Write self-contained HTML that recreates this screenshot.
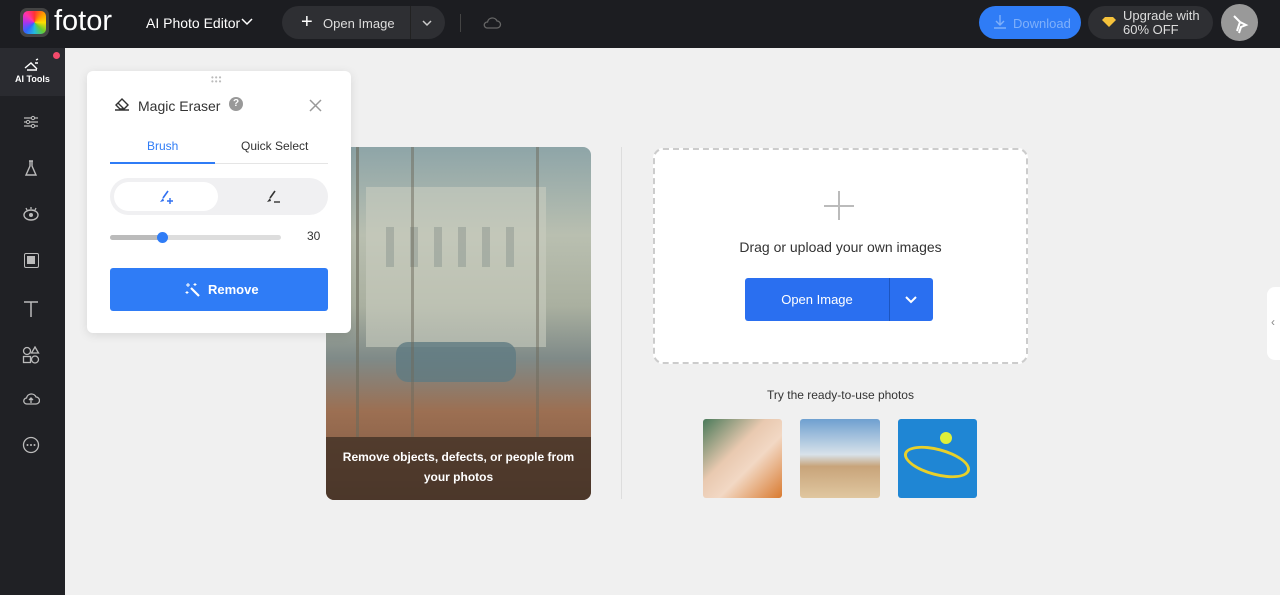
<!DOCTYPE html><html><head><meta charset="utf-8"><style>
*{box-sizing:border-box;margin:0;padding:0}
body{width:1280px;height:595px;overflow:hidden;background:#f0f0f0;font-family:"Liberation Sans",sans-serif;position:relative}
.top{position:absolute;left:0;top:0;width:1280px;height:48px;background:#1c1d21}
.side{position:absolute;left:0;top:48px;width:65px;height:547px;background:#202125}
.ab{position:absolute}
.si{position:absolute;left:22px}
</style></head><body>
<div class="top">
 <div class="ab" style="left:20px;top:8px;width:29px;height:29px;border-radius:7px;background:#444;padding:3px"><div style="width:23px;height:23px;border-radius:5px;background:conic-gradient(#f33,#f90,#fd0,#6c3,#2bd,#36f,#a3e,#f3a,#f33)"></div></div>
 <div class="ab" style="left:54px;top:5px;color:#fff;font-size:29px">fotor</div>
 <div class="ab" style="left:146px;top:15px;color:#fff;font-size:14px">AI Photo Editor</div>
 <svg class="ab" style="left:241px;top:18px" width="12" height="8"><path d="M1 1l5 5 5-5" fill="none" stroke="#fff" stroke-width="1.5"/></svg>
 <div class="ab" style="left:282px;top:6px;width:163px;height:33px;border-radius:17px;background:#2e2f33"></div>
 <div class="ab" style="left:410px;top:6px;width:1px;height:33px;background:#222"></div>
 <div class="ab" style="left:301px;top:11px;color:#fff;font-size:20px">+</div>
 <div class="ab" style="left:323px;top:16px;color:#ddd;font-size:13px">Open Image</div>
 <svg class="ab" style="left:422px;top:20px" width="10" height="7"><path d="M1 1l4 4 4-4" fill="none" stroke="#ccc" stroke-width="1.5"/></svg>
 <div class="ab" style="left:460px;top:14px;width:1px;height:18px;background:#444"></div>
 <svg class="ab" style="left:482px;top:15px" width="20" height="16"><path d="M5 13h10a3.5 3.5 0 0 0 0-7a5 5 0 0 0-9.5 1A3 3 0 0 0 5 13z" fill="none" stroke="#666" stroke-width="1.3"/></svg>
 <div class="ab" style="left:979px;top:6px;width:102px;height:33px;border-radius:17px;background:#2f7cf6;color:#7fb0fa;font-size:13px;padding:10px 0 0 34px">Download</div>
 <svg class="ab" style="left:993px;top:14px" width="14" height="16"><path d="M7 1v10M3 7l4 4 4-4M1 14h12" fill="none" stroke="#7fb0fa" stroke-width="1.4"/></svg>
 <div class="ab" style="left:1088px;top:6px;width:125px;height:33px;border-radius:17px;background:#2e2f33;color:#ddd;font-size:13px;line-height:14px;padding:3px 0 0 35px">Upgrade with<br>60% OFF</div>
 <svg class="ab" style="left:1102px;top:16px" width="14" height="12"><path d="M3 1h8l3 3-7 7-7-7z" fill="#f5c23b"/></svg>
 <div class="ab" style="left:1221px;top:4px;width:37px;height:37px;border-radius:50%;background:#999"></div>
 <svg class="ab" style="left:1230px;top:12px" width="20" height="22"><path d="M4 4l6 6 6 3-5 2-2 6M10 10l-3 9" fill="none" stroke="#fff" stroke-width="2"/></svg>
</div>
<div class="side">
 <div class="ab" style="left:0;top:0;width:65px;height:48px;background:#2a2b30"></div>
 <div class="ab" style="left:53px;top:4px;width:7px;height:7px;border-radius:50%;background:#f34a6b"></div>
 <svg class="ab" style="left:24px;top:10px" width="16" height="14"><path d="M1 10l6-5 6 6M3 12h10M12 2l2-1M11 5l3 0" fill="none" stroke="#fff" stroke-width="1.4"/></svg>
 <div class="ab" style="left:15px;top:26px;color:#fff;font-size:9px;font-weight:bold">AI Tools</div>
 <svg class="si" style="top:66px" width="18" height="16"><path d="M2 4h14M2 8h14M2 12h14" stroke="#bbb" stroke-width="1.3"/><circle cx="11" cy="4" r="1.6" fill="#202125" stroke="#bbb"/><circle cx="6" cy="8" r="1.6" fill="#202125" stroke="#bbb"/><circle cx="11" cy="12" r="1.6" fill="#202125" stroke="#bbb"/></svg>
 <svg class="si" style="top:111px" width="18" height="18"><path d="M7 2h4M8 2v5l-4 9h10l-4-9V2" fill="none" stroke="#bbb" stroke-width="1.4"/></svg>
 <svg class="si" style="top:157px" width="18" height="18"><ellipse cx="9" cy="10" rx="7" ry="5" fill="none" stroke="#bbb" stroke-width="1.4"/><circle cx="9" cy="10" r="2" fill="#bbb"/><path d="M9 2v2M4 3l1 2M14 3l-1 2" stroke="#bbb" stroke-width="1.3"/></svg>
 <div class="ab" style="left:24px;top:205px;width:15px;height:15px;border:1.5px solid #bbb;border-radius:2px;padding:2px"><div style="width:8px;height:8px;background:#bbb"></div></div>
 <svg class="si" style="top:252px" width="18" height="18"><path d="M2 2h14M9 2v15" stroke="#bbb" stroke-width="1.5"/></svg>
 <svg class="si" style="top:298px" width="18" height="18"><circle cx="5" cy="5" r="3.5" fill="none" stroke="#bbb" stroke-width="1.3"/><path d="M13 1l3.5 6h-7z" fill="none" stroke="#bbb" stroke-width="1.3"/><rect x="1.5" y="10.5" width="7" height="6" fill="none" stroke="#bbb" stroke-width="1.3"/><circle cx="13" cy="13.5" r="3.5" fill="none" stroke="#bbb" stroke-width="1.3"/></svg>
 <svg class="si" style="top:343px" width="18" height="16"><path d="M5 13h9a3.5 3.5 0 0 0 0-7a5 5 0 0 0-9.5 1A3 3 0 0 0 5 13zM9 12V7M7 9l2-2 2 2" fill="none" stroke="#bbb" stroke-width="1.3"/></svg>
 <svg class="si" style="top:388px" width="18" height="18"><circle cx="9" cy="9" r="7.5" fill="none" stroke="#bbb" stroke-width="1.3"/><circle cx="5.5" cy="9" r="1" fill="#bbb"/><circle cx="9" cy="9" r="1" fill="#bbb"/><circle cx="12.5" cy="9" r="1" fill="#bbb"/></svg>
</div>
<!-- photo card -->
<div class="ab" style="left:326px;top:147px;width:265px;height:353px;border-radius:8px;overflow:hidden;background:linear-gradient(180deg,#8ea5a8 0%,#b9bfb0 25%,#aab0a0 45%,#7f8a88 60%,#9c6f52 75%,#7a5540 100%)">
 <div class="ab" style="left:40px;top:40px;width:180px;height:160px;background:#c9cdc0;opacity:.6"></div>
 <div class="ab" style="left:60px;top:80px;width:140px;height:40px;background:repeating-linear-gradient(90deg,#8c9690 0 8px,transparent 8px 24px);opacity:.5"></div>
 <div class="ab" style="left:70px;top:195px;width:120px;height:40px;border-radius:12px;background:#5f7a82;opacity:.8"></div>
 <div class="ab" style="left:30px;top:0;width:3px;height:290px;background:#6d6a5c;opacity:.6"></div>
 <div class="ab" style="left:85px;top:0;width:3px;height:290px;background:#6d6a5c;opacity:.5"></div>
 <div class="ab" style="left:210px;top:0;width:3px;height:290px;background:#6d6a5c;opacity:.5"></div>
 <div class="ab" style="left:0;top:290px;width:265px;height:63px;background:rgba(60,45,35,.75);color:#fff;font-size:12px;font-weight:bold;text-align:center;line-height:20px;padding-top:10px">Remove objects, defects, or people from<br>your photos</div>
</div>
<div class="ab" style="left:621px;top:147px;width:1px;height:352px;background:#ddd"></div>
<div class="ab" style="left:653px;top:148px;width:375px;height:216px;border:2px dashed #ccc;border-radius:10px;background:#fff"></div>
<div class="ab" style="left:824px;top:205px;width:30px;height:1.5px;background:#bbb"></div>
<div class="ab" style="left:838px;top:191px;width:1.5px;height:29px;background:#bbb"></div>
<div class="ab" style="left:653px;top:239px;width:375px;text-align:center;color:#333;font-size:14px">Drag or upload your own images</div>
<div class="ab" style="left:745px;top:278px;width:188px;height:43px;border-radius:3px;background:#2a6ff0"></div>
<div class="ab" style="left:889px;top:278px;width:1px;height:43px;background:#1c55c0"></div>
<div class="ab" style="left:745px;top:292px;width:144px;text-align:center;color:#fff;font-size:13px">Open Image</div>
<svg class="ab" style="left:904px;top:295px" width="14" height="10"><path d="M2 2l5 5 5-5" fill="none" stroke="#fff" stroke-width="2"/></svg>
<div class="ab" style="left:653px;top:388px;width:375px;text-align:center;color:#333;font-size:12px">Try the ready-to-use photos</div>
<div class="ab" style="left:703px;top:419px;width:79px;height:79px;border-radius:3px;background:linear-gradient(135deg,#4a7a5a,#e9c9b0 40%,#f2d8c4 60%,#d97a30)"></div>
<div class="ab" style="left:800px;top:419px;width:80px;height:79px;border-radius:3px;background:linear-gradient(180deg,#6fa0d0,#d8e2ea 45%,#c8a47a 60%,#e0c7a0)"></div>
<div class="ab" style="left:898px;top:419px;width:79px;height:79px;border-radius:3px;background:#1f86d4"></div>
<div class="ab" style="left:903px;top:448px;width:68px;height:28px;border:3px solid #e8d02a;border-radius:50%;transform:rotate(15deg)"></div>
<div class="ab" style="left:940px;top:432px;width:12px;height:12px;border-radius:50%;background:#dff03a"></div>
<div class="ab" style="left:1267px;top:287px;width:13px;height:73px;border-radius:8px 0 0 8px;background:#fff;color:#888;font-size:12px;padding:28px 0 0 4px">‹</div>
<!-- panel -->
<div class="ab" style="left:87px;top:71px;width:264px;height:262px;background:#fff;border-radius:6px;box-shadow:0 2px 10px rgba(0,0,0,.1)">
 <div class="ab" style="left:124px;top:5px;color:#bbb;font-size:8px;letter-spacing:1px;line-height:4px">•••<br>•••</div>
 <svg class="ab" style="left:26px;top:25px" width="18" height="16"><path d="M3 9l6-6 6 6-4 4H7zM5 7l6 6M2 14h14" fill="none" stroke="#333" stroke-width="1.4"/></svg>
 <div class="ab" style="left:51px;top:27px;font-size:14px;color:#333">Magic Eraser</div>
 <div class="ab" style="left:142px;top:26px;width:14px;height:14px;border-radius:50%;background:#999;color:#fff;font-size:10px;text-align:center;line-height:14px;font-weight:bold">?</div>
 <svg class="ab" style="left:222px;top:28px" width="13" height="13"><path d="M1 1l11 11M12 1L1 12" stroke="#999" stroke-width="1.5"/></svg>
 <div class="ab" style="left:60px;top:68px;color:#2f7cf6;font-size:12px">Brush</div>
 <div class="ab" style="left:154px;top:68px;color:#333;font-size:12px">Quick Select</div>
 <div class="ab" style="left:23px;top:92px;width:218px;height:1px;background:#e5e5e5"></div>
 <div class="ab" style="left:23px;top:91px;width:105px;height:2px;background:#2f7cf6"></div>
 <div class="ab" style="left:23px;top:107px;width:218px;height:37px;border-radius:19px;background:#f0f0f2"></div>
 <div class="ab" style="left:27px;top:111px;width:104px;height:29px;border-radius:15px;background:#fff"></div>
 <svg class="ab" style="left:71px;top:118px" width="16" height="16"><path d="M10 2L5 9" stroke="#2f6ff0" stroke-width="1.6"/><path d="M5 9l-3 4 4-1z" fill="#2f6ff0"/><path d="M12 9v6M9 12h6" stroke="#2f6ff0" stroke-width="1.4"/></svg>
 <svg class="ab" style="left:178px;top:118px" width="16" height="16"><path d="M10 2L5 9" stroke="#333" stroke-width="1.6"/><path d="M5 9l-3 4 4-1z" fill="#333"/><path d="M9 13h6" stroke="#333" stroke-width="1.4"/></svg>
 <div class="ab" style="left:23px;top:164px;width:171px;height:5px;border-radius:3px;background:#ddd"></div>
 <div class="ab" style="left:23px;top:164px;width:53px;height:5px;border-radius:3px;background:#bbb"></div>
 <div class="ab" style="left:70px;top:161px;width:11px;height:11px;border-radius:50%;background:#2f7cf6"></div>
 <div class="ab" style="left:220px;top:158px;color:#333;font-size:12px">30</div>
 <div class="ab" style="left:23px;top:197px;width:218px;height:43px;border-radius:3px;background:#2f7cf6;color:#fff;font-size:13px;font-weight:bold;padding:14px 0 0 98px">Remove</div>
 <svg class="ab" style="left:98px;top:211px" width="16" height="16"><path d="M6 6l8 8" stroke="#fff" stroke-width="2.2"/><path d="M3 1v4M1 3h4M10 1v3M8.5 2.5h3M2 9v3M0.5 10.5h3" stroke="#fff" stroke-width="1"/></svg>
</div>
</body></html>
